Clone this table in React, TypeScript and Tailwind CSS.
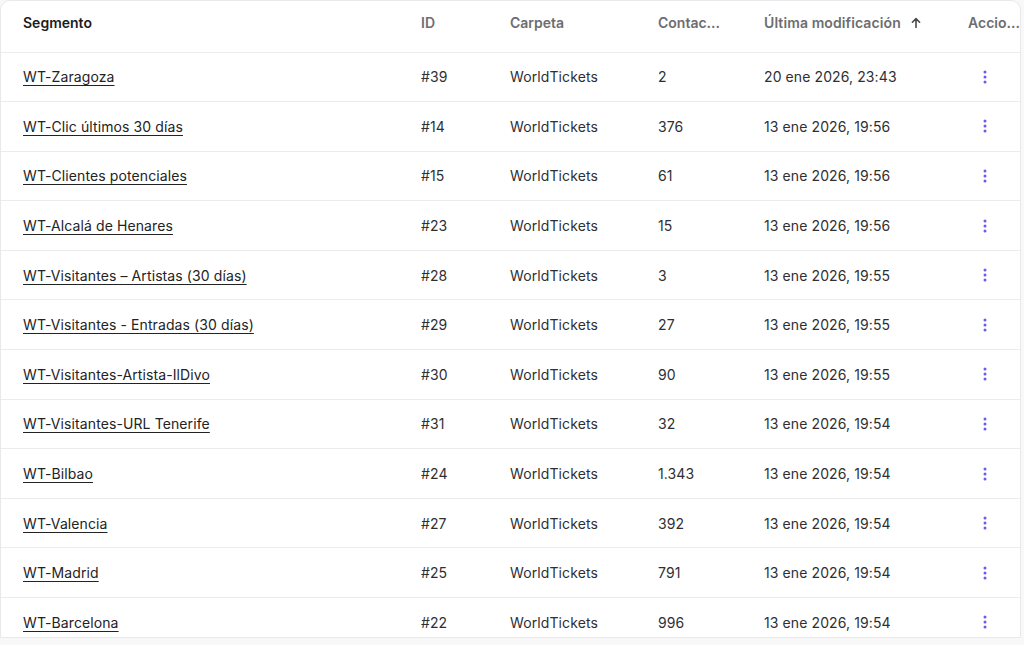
const rows = [
  { name: "WT-Zaragoza", id: "#39", contacts: "2", date: "20 ene 2026, 23:43" },
  { name: "WT-Clic últimos 30 días", id: "#14", contacts: "376", date: "13 ene 2026, 19:56" },
  { name: "WT-Clientes potenciales", id: "#15", contacts: "61", date: "13 ene 2026, 19:56" },
  { name: "WT-Alcalá de Henares", id: "#23", contacts: "15", date: "13 ene 2026, 19:56" },
  { name: "WT-Visitantes – Artistas (30 días)", id: "#28", contacts: "3", date: "13 ene 2026, 19:55" },
  { name: "WT-Visitantes - Entradas (30 días)", id: "#29", contacts: "27", date: "13 ene 2026, 19:55" },
  { name: "WT-Visitantes-Artista-IlDivo", id: "#30", contacts: "90", date: "13 ene 2026, 19:55" },
  { name: "WT-Visitantes-URL Tenerife", id: "#31", contacts: "32", date: "13 ene 2026, 19:54" },
  { name: "WT-Bilbao", id: "#24", contacts: "1.343", date: "13 ene 2026, 19:54" },
  { name: "WT-Valencia", id: "#27", contacts: "392", date: "13 ene 2026, 19:54" },
  { name: "WT-Madrid", id: "#25", contacts: "791", date: "13 ene 2026, 19:54" },
  { name: "WT-Barcelona", id: "#22", contacts: "996", date: "13 ene 2026, 19:54" },
];

const KebabIcon = () => (
  <svg width="4" height="14" viewBox="0 0 4 14" fill="#6b5cf0">
    <circle cx="2" cy="2" r="1.5" />
    <circle cx="2" cy="7" r="1.5" />
    <circle cx="2" cy="12" r="1.5" />
  </svg>
);

export default function App() {
  return (
    <div className="w-[1024px] h-[645px] bg-[#f8f8f9] overflow-hidden" style={{ fontFamily: "Inter, 'Liberation Sans', sans-serif" }}>
      <div className="w-[1021px] h-[638px] overflow-hidden bg-white border border-[#e9e9ec] rounded-t-[10px]">
        <table className="w-full table-fixed border-collapse text-[14px]">
          <colgroup>
            <col className="w-[397px]" />
            <col className="w-[89px]" />
            <col className="w-[148px]" />
            <col className="w-[106px]" />
            <col className="w-[204px]" />
            <col />
          </colgroup>
          <thead>
            <tr className="h-[51px] border-b border-[#ececef] text-left">
              <th className="px-[22px] pb-[7px] font-semibold text-[#1c1c1c]">Segmento</th>
              <th className="px-[23px] pb-[7px] font-semibold text-[#6d6d70]">ID</th>
              <th className="px-[23px] pb-[7px] font-semibold text-[#6d6d70]">Carpeta</th>
              <th className="px-[23px] pb-[7px] font-semibold text-[#6d6d70] whitespace-nowrap overflow-hidden">Contac...</th>
              <th className="px-[23px] pb-[7px] font-semibold text-[#6d6d70] whitespace-nowrap">
                <span className="inline-flex items-center gap-[9px] tracking-[0.1px]">
                  Última modificación
                  <svg width="12" height="12" viewBox="0 0 12 12" fill="none" stroke="#4a4a4d" strokeWidth="1.6" strokeLinecap="round" strokeLinejoin="round">
                    <path d="M6 10.5V1.8M2.4 5.2 6 1.6l3.6 3.6" />
                  </svg>
                </span>
              </th>
              <th className="pl-[23px] pr-0 pb-[7px] font-semibold text-[#6d6d70] whitespace-nowrap overflow-hidden">Accio...</th>
            </tr>
          </thead>
          <tbody>
            {rows.map((r) => (
              <tr key={r.id} className="h-[49.6px] border-b border-[#ececef] text-[#2f2f32] tracking-[0.1px]">
                <td className="px-[22px]">
                  <a href="#" className="text-[#232326] underline underline-offset-[3px] decoration-[#232326]">{r.name}</a>
                </td>
                <td className="px-[23px]">{r.id}</td>
                <td className="px-[23px]">WorldTickets</td>
                <td className="px-[23px]">{r.contacts}</td>
                <td className="px-[23px] whitespace-nowrap">{r.date}</td>
                <td className="pl-[38px]">
                  <button className="flex items-center h-[14px]" aria-label="Acciones">
                    <KebabIcon />
                  </button>
                </td>
              </tr>
            ))}
          </tbody>
        </table>
      </div>
    </div>
  );
}
